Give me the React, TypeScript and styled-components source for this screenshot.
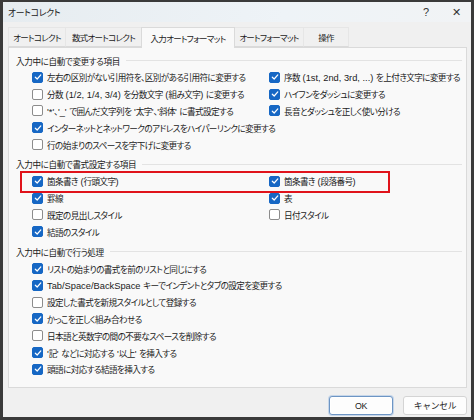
import React from "react";
import styled, { createGlobalStyle } from "styled-components";

const GlobalStyle = createGlobalStyle`
  html, body {
    margin: 0;
    padding: 0;
    background: #3a3a3a;
  }
  body {
    font-family: "Noto Sans CJK JP", sans-serif;
    font-feature-settings: "palt";
    color: #1b1b1b;
  }
`;

const Screen = styled.div`
  width: 474px;
  height: 420px;
  padding: 2px 3px 0 3px;
  box-sizing: border-box;
  background: #3a3a3a;
  overflow: hidden;
`;

const Window = styled.div`
  width: 468px;
  height: 415px;
  background: #f0f0f0;
  display: flex;
  flex-direction: column;
`;

const TitleBar = styled.div`
  height: 20px;
  display: flex;
  align-items: center;
  padding: 0 0 0 5px;
  background: linear-gradient(90deg, #e6ecf0 0%, #eef3f7 60%, #f1f3f5 100%);
  font-size: 8.8px;
  letter-spacing: -0.3px;
`;

const TitleText = styled.span`
  flex: 1;
`;

const TitleButton = styled.span`
  width: 30px;
  text-align: center;
  font-size: 11px;
  color: #333;
  font-family: "Liberation Sans", sans-serif;
`;

const Body = styled.div`
  flex: 1;
  display: flex;
  flex-direction: column;
  padding: 5px 4px 2px 5px;
`;

const TabStrip = styled.div`
  display: flex;
  height: 20px;
  align-items: flex-end;
`;

const Tab = styled.div<{ $active?: boolean; $w: number }>`
  width: ${(p) => p.$w}px;
  height: ${(p) => (p.$active ? "21px" : "20px")};
  margin-bottom: ${(p) => (p.$active ? "-1px" : "0")};
  display: flex;
  align-items: center;
  justify-content: center;
  font-size: 8.5px;
  letter-spacing: -0.7px;
  white-space: nowrap;
  box-sizing: border-box;
  background: ${(p) => (p.$active ? "#f9f9f9" : "#f0f0f0")};
  border: 1px solid ${(p) => (p.$active ? "#dadada" : "#e6e6e6")};
  border-bottom: ${(p) => (p.$active ? "none" : "1px solid #dadada")};
  margin-right: -1px;
  position: relative;
  z-index: ${(p) => (p.$active ? 1 : 0)};
`;

const Panel = styled.div`
  height: 341px;
  background: #f9f9f9;
  border: 1px solid #dadada;
  box-sizing: border-box;
  padding: 4px 4px 0 7px;
`;

const Section = styled.div`
  margin-bottom: 3px;
`;

const Heading = styled.div`
  height: 17px;
  display: flex;
  align-items: center;
  font-size: 8.6px;
  letter-spacing: -0.4px;
  &::after {
    content: "";
    flex: 1;
    height: 1px;
    background: #e3e3e3;
    margin-left: 6px;
  }
`;

const Grid = styled.div<{ $cols: number }>`
  position: relative;
  display: grid;
  grid-template-columns: ${(p) => (p.$cols === 2 ? "237px 1fr" : "1fr")};
  grid-auto-flow: column;
  grid-template-rows: repeat(var(--rows), 16.8px);
  padding-left: 16px;
`;

const Row = styled.label`
  display: flex;
  align-items: center;
  gap: 4px;
`;

const Label = styled.span`
  font-size: 8.6px;
  letter-spacing: -0.6px;
  white-space: pre;
`;

// Latin runs are set a little larger, like the UI font does
const Latin = styled.span`
  font-family: "Liberation Sans", sans-serif;
  font-size: 9.3px;
  letter-spacing: 0;
`;

const Box = styled.span<{ $checked: boolean }>`
  width: 11px;
  height: 11px;
  box-sizing: border-box;
  border-radius: 2px;
  flex: none;
  display: flex;
  align-items: center;
  justify-content: center;
  background: ${(p) => (p.$checked ? "#1667c4" : "#ffffff")};
  border: 1px solid ${(p) => (p.$checked ? "#1667c4" : "#8c8c8c")};
`;

const Highlight = styled.div`
  position: absolute;
  left: 4px;
  top: -1.5px;
  width: 370px;
  height: 22px;
  box-sizing: border-box;
  border: 2px solid #e0131b;
  pointer-events: none;
`;

const Footer = styled.div`
  flex: 1;
  display: flex;
  justify-content: flex-end;
  align-items: flex-end;
  gap: 10px;
`;

const Button = styled.button<{ $primary?: boolean }>`
  width: 64px;
  height: 19px;
  padding: 0;
  font-family: "Liberation Sans", "Noto Sans CJK JP", sans-serif;
  font-size: 8.8px;
  letter-spacing: -0.3px;
  color: #1b1b1b;
  background: #fdfdfd;
  border-radius: 3px;
  border: 1px solid ${(p) => (p.$primary ? "#6d95c4" : "#d4d4d4")};
  box-shadow: ${(p) => (p.$primary ? "inset 0 0 0 1px #ffffff, 0 0 0 1px #c6d6e9" : "none")};
`;

type Item = { label: string; checked: boolean; col?: 2 };

const Check = ({ checked }: { checked: boolean }) => (
  <Box $checked={checked}>
    {checked && (
      <svg width="8" height="8" viewBox="0 0 8 8">
        <path d="M1.3 4.2 L3.2 6 L6.8 1.9" fill="none" stroke="#fff" strokeWidth="1.2" strokeLinecap="round" strokeLinejoin="round" />
      </svg>
    )}
  </Box>
);

// split a label into Japanese and ASCII runs
const renderLabel = (text: string) =>
  text.split(/([\x20-\x7e]+)/).map((part, i) =>
    /^[\x20-\x7e]+$/.test(part) ? <Latin key={i}>{part}</Latin> : part
  );

const sections: { title: string; rows: number; items: Item[]; mark?: boolean }[] = [
  {
    title: "入力中に自動で変更する項目",
    rows: 5,
    items: [
      { label: "左右の区別がない引用符を、区別がある引用符に変更する", checked: true },
      { label: "分数 (1/2, 1/4, 3/4) を分数文字 (組み文字) に変更する", checked: false },
      { label: "'*'、'_' で囲んだ文字列を '太字'、'斜体' に書式設定する", checked: false },
      { label: "インターネットとネットワークのアドレスをハイパーリンクに変更する", checked: true },
      { label: "行の始まりのスペースを字下げに変更する", checked: false },
      { label: "序数 (1st, 2nd, 3rd, ...) を上付き文字に変更する", checked: true, col: 2 },
      { label: "ハイフンをダッシュに変更する", checked: true, col: 2 },
      { label: "長音とダッシュを正しく使い分ける", checked: true, col: 2 },
    ],
  },
  {
    title: "入力中に自動で書式設定する項目",
    rows: 4,
    mark: true,
    items: [
      { label: "箇条書き (行頭文字)", checked: true },
      { label: "罫線", checked: true },
      { label: "既定の見出しスタイル", checked: false },
      { label: "結語のスタイル", checked: true },
      { label: "箇条書き (段落番号)", checked: true, col: 2 },
      { label: "表", checked: true, col: 2 },
      { label: "日付スタイル", checked: false, col: 2 },
    ],
  },
  {
    title: "入力中に自動で行う処理",
    rows: 7,
    items: [
      { label: "リストの始まりの書式を前のリストと同じにする", checked: true },
      { label: "Tab/Space/BackSpace キーでインデントとタブの設定を変更する", checked: true },
      { label: "設定した書式を新規スタイルとして登録する", checked: false },
      { label: "かっこを正しく組み合わせる", checked: true },
      { label: "日本語と英数字の間の不要なスペースを削除する", checked: false },
      { label: "'記' などに対応する '以上' を挿入する", checked: true },
      { label: "頭語に対応する結語を挿入する", checked: true },
    ],
  },
];

const tabs = [
  { label: "オートコレクト", w: 58 },
  { label: "数式オートコレクト", w: 77 },
  { label: "入力オートフォーマット", w: 94 },
  { label: "オートフォーマット", w: 70 },
  { label: "操作", w: 46 },
];

export default function App() {
  return (
    <>
      <GlobalStyle />
      <Screen>
        <Window>
          <TitleBar>
            <TitleText>オートコレクト</TitleText>
            <TitleButton>?</TitleButton>
            <TitleButton>✕</TitleButton>
          </TitleBar>
          <Body>
            <TabStrip>
              {tabs.map((t, i) => (
                <Tab key={t.label} $w={t.w} $active={i === 2}>
                  {t.label}
                </Tab>
              ))}
            </TabStrip>
            <Panel>
              {sections.map((s) => {
                const cols = s.items.some((it) => it.col === 2) ? 2 : 1;
                return (
                  <Section key={s.title}>
                    <Heading>{s.title}</Heading>
                    <Grid $cols={cols} style={{ ["--rows" as string]: s.rows } as React.CSSProperties}>
                      {s.items.map((it) => (
                        <Row key={it.label} style={{ gridColumn: it.col === 2 ? 2 : 1 }}>
                          <Check checked={it.checked} />
                          <Label>{renderLabel(it.label)}</Label>
                        </Row>
                      ))}
                      {s.mark && <Highlight />}
                    </Grid>
                  </Section>
                );
              })}
            </Panel>
            <Footer>
              <Button $primary>OK</Button>
              <Button>キャンセル</Button>
            </Footer>
          </Body>
        </Window>
      </Screen>
    </>
  );
}
